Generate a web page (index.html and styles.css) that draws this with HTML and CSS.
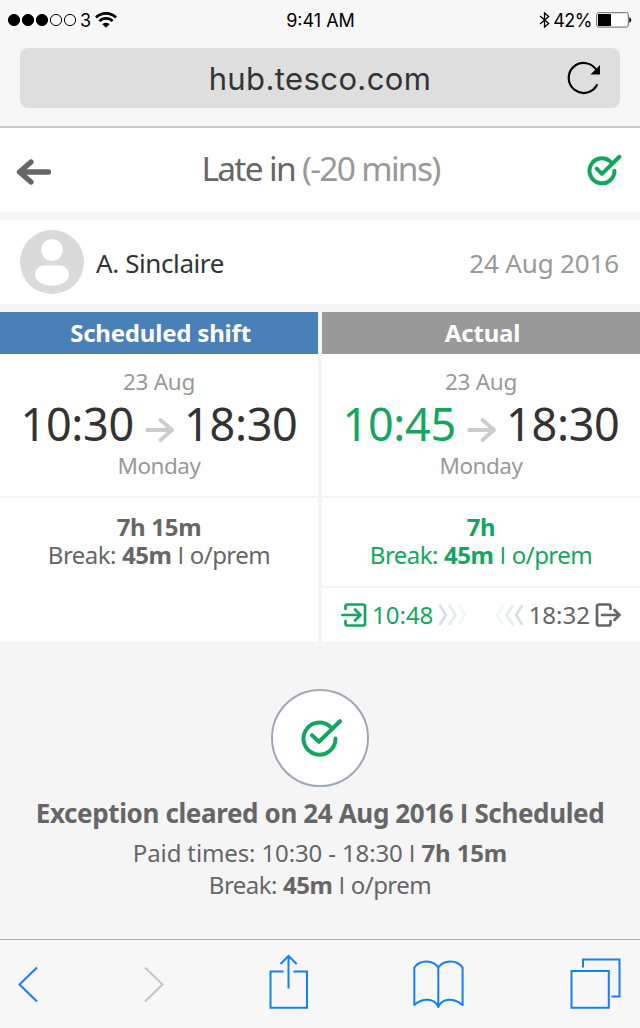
FILE: index.html
```html
<!DOCTYPE html>
<html lang="en">
<head>
<meta charset="utf-8">
<title>Late in</title>
<link rel="stylesheet" href="styles.css">
</head>
<body>
<div class="browser-top">
  <div class="status">
    <div class="status-left">
      <svg width="70" height="14" viewBox="0 0 70 14"><g stroke="#000" stroke-width="1"><circle cx="6" cy="7" r="5.6"/><circle cx="20" cy="7" r="5.6"/><circle cx="34" cy="7" r="5.6"/><circle cx="48" cy="7" r="5.6" fill="none"/><circle cx="62" cy="7" r="5.6" fill="none"/></g></svg>
      <span class="carrier">3</span>
      <svg width="22" height="16" viewBox="0 0 22 16"><g fill="none" stroke="#000" stroke-width="2.7"><path d="M1 5.5a14.2 14.2 0 0 1 20 0"/><path d="M4.4 9.1a9.3 9.3 0 0 1 13.2 0"/></g><path d="M11 15.8L7.4 12.2a5.1 5.1 0 0 1 7.2 0z"/></svg>
    </div>
    <div class="clock">9:41 AM</div>
    <div class="status-right">
      <svg width="12" height="16" viewBox="0 0 12 16"><path d="M1 4l8.7 7.4L5.5 15V1l4.2 3.6L1 12" fill="none" stroke="#000" stroke-width="1.3"/></svg>
      <span class="percent">42%</span>
      <svg width="36" height="16" viewBox="0 0 36 16"><rect x=".7" y=".7" width="31.6" height="14.4" rx="2" fill="#fff" stroke="#666"/><path d="M2 2h13v12H2z"/><path d="M33.3 5.2c2.6 1 2.6 4.6 0 5.6z"/></svg>
    </div>
  </div>
  <div class="address">
    <span class="host">hub.tesco.com</span>
    <svg class="reload" width="34" height="34" viewBox="0 0 34 34"><path d="M30.3 23.3A15 15 0 1 1 29.8 9.700" fill="none" stroke="#000" stroke-width="2.2"/><path d="M33 4v9.5h-9.5z"/></svg>
  </div>
</div>

<header class="title-bar">
  <svg width="36" height="28" viewBox="0 0 36 28"><path d="M32.5 14H3.5M15 4L3.5 14 15 24" fill="none" stroke="#666" stroke-width="5.3" stroke-linecap="round" stroke-linejoin="round"/></svg>
  <h1>Late in <span>(-20 mins)</span></h1>
  <svg class="cleared" width="36" height="34" viewBox="0 0 36 34"><path d="M28.5 17.7a12.5 12.5 0 1 1-4.4-9.4M10.7 15.6l5.2 5.3L33.4 3.8" fill="none" stroke="#14a661" stroke-width="4" stroke-linecap="round" stroke-linejoin="round"/></svg>
</header>

<section class="person">
  <svg width="64" height="64" viewBox="0 0 64 64"><circle cx="32" cy="32" r="32" fill="#dadada"/><circle cx="32" cy="20" r="10.8" fill="#fff"/><path d="M24 35.5h16c5 0 9 4.500 9 9.500 0 6-8 10.800-17 10.800S15 51 15 45c0-5 4-9.500 9-9.500z" fill="#fff"/></svg>
  <span class="name">A. Sinclaire</span>
  <span class="date">24 Aug 2016</span>
</section>

<main class="columns">
  <section class="column">
    <h2 class="band band-blue">Scheduled shift</h2>
    <div class="shift">
      <p class="small">23 Aug</p>
      <div class="times">
        <span>10:30</span>
        <svg width="30" height="26" viewBox="0 0 30 26"><path d="M2 13h25M15.500 3L27 13 15.500 23" fill="none" stroke="#ccc" stroke-width="3.800" stroke-linecap="round" stroke-linejoin="round"/></svg>
        <span>18:30</span>
      </div>
      <p class="small day">Monday</p>
    </div>
    <div class="hours">
      <p class="total">7h 15m</p>
      <p class="break">Break: <b>45m</b> <i class="sep">I</i> o/prem</p>
    </div>
  </section>
  <section class="column">
    <h2 class="band band-grey">Actual</h2>
    <div class="shift">
      <p class="small">23 Aug</p>
      <div class="times">
        <span class="green">10:45</span>
        <svg width="30" height="26" viewBox="0 0 30 26"><path d="M2 13h25M15.500 3L27 13 15.500 23" fill="none" stroke="#ccc" stroke-width="3.800" stroke-linecap="round" stroke-linejoin="round"/></svg>
        <span>18:30</span>
      </div>
      <p class="small day">Monday</p>
    </div>
    <div class="hours hours-actual green">
      <p class="total">7h</p>
      <p class="break">Break: <b>45m</b> <i class="sep">I</i> o/prem</p>
    </div>
    <div class="punches">
      <div class="punch green">
        <svg width="26" height="26" viewBox="0 0 26 26"><g fill="none" stroke="#14a661" stroke-width="2.700" stroke-linecap="round" stroke-linejoin="round"><path d="M4.500 7V4.500Q4.500 2.500 6.500 2.500H22Q24 2.500 24 4.500V21.500Q24 23.500 22 23.500H6.500Q4.500 23.500 4.500 21.500V19M1.500 13H19M14 7.500L19.500 13 14 18.500"/></g></svg>
        <span>10:48</span>
        <svg class="trail" width="29" height="24" viewBox="0 0 29 24"><g fill="none" stroke="#c9ced6" stroke-width="2.500"><path d="M1.500 2L8 12 1.500 22" opacity=".7"/><path d="M11 2l6.500 10L11 22" opacity=".45"/><path d="M20.500 2L27 12l-6.500 10" opacity=".2"/></g></svg>
      </div>
      <div class="punch">
        <svg class="trail" width="29" height="24" viewBox="0 0 29 24"><g fill="none" stroke="#c9ced6" stroke-width="2.500"><path d="M27.500 2L21 12l6.500 10" opacity=".7"/><path d="M18 2l-6.500 10L18 22" opacity=".45"/><path d="M8.500 2L2 12l6.500 10" opacity=".2"/></g></svg>
        <span>18:32</span>
        <svg width="26" height="26" viewBox="0 0 26 26"><g fill="none" stroke="#666" stroke-width="2.700" stroke-linecap="round" stroke-linejoin="round"><path d="M15.500 7V4.500Q15.500 2.500 13.500 2.500H4Q2 2.500 2 4.500V21.500Q2 23.500 4 23.500H13.500Q15.500 23.500 15.500 21.500V19M7 13H24.500M19.500 8L24.500 13 19.500 18"/></g></svg>
      </div>
    </div>
  </section>
</main>

<section class="outcome">
  <div class="badge">
    <svg width="50" height="44" viewBox="0 0 50 44"><path d="M40.500 22.500a16 16 0 1 1-5-11.500M17 19.200l7 6.600L45 5.200" fill="none" stroke="#14a661" stroke-width="4" stroke-linecap="round" stroke-linejoin="round"/></svg>
  </div>
  <h3>Exception cleared on 24 Aug 2016 <i class="sep">I</i> Scheduled</h3>
  <p class="paid">Paid times: 10:30 - 18:30 <i class="sep">I</i> <b>7h 15m</b></p>
  <p class="break">Break: <b>45m</b> <i class="sep">I</i> o/prem</p>
</section>

<nav class="toolbar">
  <svg width="20" height="60" viewBox="18 952 20 60"><path d="M37 967.500L19.500 984.500 37 1001.500"/></svg>
  <svg class="disabled" width="21" height="60" viewBox="143 952 21 60"><path d="M145 967.500l17.500 17L145 1001.500"/></svg>
  <svg width="39" height="60" viewBox="269.500 952 39 60"><path d="M284 971.500H271v36.200h36.500v-36.200H294M289 988.500V956M281 964l8-8 8.200 8"/></svg>
  <svg width="51" height="60" viewBox="413.700 952 51 60"><path d="M439 967.500C434 960 421 959 415 967.500V1005C424 997.500 435 998 439 1007 443 998 454 997.500 463.300 1005V967.500C457 959 444 960 439 967.500V1007" stroke-linejoin="round"/></svg>
  <svg width="51" height="60" viewBox="569.500 952 51 60"><path d="M571 971h37.300v36.700H571zM582.500 967.500v-8H619v37h-8"/></svg>
</nav>
</body>
</html>
```
FILE: styles.css
```css
* { box-sizing: border-box; }
body {
  margin: 0;
  width: 640px;
  height: 1028px;
  overflow: hidden;
  display: flex;
  flex-direction: column;
  background: #f5f5f5;
  color: #666;
  font-family: "Noto Sans", sans-serif;
  font-size: 24px;
}
svg { display: block; flex: none; }
h1, h2, h3, p { margin: 0; font-weight: 400; white-space: nowrap; }
b { font-weight: 700; }
.green { color: #14a661; }
.sep { font-family: "Open Sans", sans-serif; font-style: normal; }

.browser-top {
  height: 128px;
  background: #f7f7f7;
  border-bottom: 2px solid #c9c9c9;
  padding: 0 20px;
  color: #000;
  font-family: Inter, sans-serif;
}
.status {
  display: grid;
  grid-template-columns: 1fr auto 1fr;
  align-items: center;
  height: 40px;
  margin: 0 -12px 8px;
  font-size: 18px;
}
.status-left, .status-right { display: flex; align-items: center; }
.clock { padding-left: 1px; }
.carrier { margin: 0 5px 0 2px; }
.status-left svg + .carrier + svg { margin-left: -1px; }
.status-right { justify-content: flex-end; }
.percent { margin: 0 4px 0 2px; letter-spacing: -.5px; }
.address {
  display: flex;
  align-items: center;
  justify-content: flex-end;
  height: 60px;
  padding: 0 19px 0 0;
  border-radius: 8px;
  background: #dedede;
}
.host {
  flex: 1;
  padding-left: 53px;
  text-align: center;
  font-size: 31px;
  letter-spacing: .4px;
  color: #333;
}

.title-bar {
  display: flex;
  align-items: center;
  justify-content: space-between;
  height: 84px;
  padding: 3px 18px 0 16px;
  background: #fff;
}
.title-bar h1 { font-size: 33.5px; line-height: 50px; letter-spacing: -1.7px; margin-top: -7px; padding-left: 3px; }
.title-bar h1 span { color: #999; }
.cleared { margin-top: -4px; }

.person {
  display: flex;
  align-items: center;
  height: 84px;
  margin: 8px 0;
  padding: 0 21px 0 20px;
  background: #fff;
  font-size: 26px;
}
.person span { padding-top: 2px; }
.name { margin-left: 12px; color: #333; letter-spacing: -.4px; }
.date { margin-left: auto; color: #999; letter-spacing: -.15px; }

.columns { display: grid; grid-template-columns: 318px 318px; gap: 4px; height: 330px; }
.column { display: flex; flex-direction: column; background: #fff; text-align: center; }
.band { height: 42px; padding-left: 3px; line-height: 42px; font-size: 24px; font-weight: 700; color: #fff; letter-spacing: -.2px; }
.band-blue { background: #4a80b8; }
.band-grey { background: #999; }
.shift { height: 144px; padding-top: 14px; border-bottom: 2px solid #f5f5f5; }
.small { font-size: 22.5px; line-height: 28px; color: #999; letter-spacing: -.3px; }
.day { letter-spacing: -.5px; }
.times {
  display: flex;
  justify-content: center;
  gap: 10px;
  height: 56px;
  font-size: 45px;
  line-height: 56px;
  letter-spacing: -.3px;
}
.times span { color: #333; }
.times .green { color: #14a661; }
.times svg { margin: 21px -1px 0 1px; }
.hours { padding-top: 15px; line-height: 28px; }
.hours-actual { height: 90px; border-bottom: 2px solid #f5f5f5; }
.total { font-weight: 700; letter-spacing: -.3px; }
.break { letter-spacing: -.55px; word-spacing: .5px; }
.punches { display: flex; justify-content: space-between; height: 54px; padding: 0 19px; line-height: 54px; }
.punch { display: flex; align-items: center; gap: 5px; }

.outcome { flex: 1; padding-top: 47px; line-height: 32px; text-align: center; }
.badge {
  display: grid;
  place-items: center;
  width: 98px;
  height: 98px;
  margin: 0 auto 10px;
  border: 2px solid #a0a8b4;
  border-radius: 50%;
  background: #fff;
}
.outcome h3 { margin-bottom: 8px; font-size: 26px; font-weight: 700; letter-spacing: -.37px; }
.paid { letter-spacing: -.13px; }

.toolbar {
  display: flex;
  justify-content: space-between;
  height: 89px;
  padding: 12px 19.5px 0 18px;
  border-top: 1px solid #a9a9a9;
  background: #f7f7f7;
}
.toolbar svg { fill: none; stroke: #147efb; stroke-width: 2; }
.toolbar .disabled { stroke: #c5c5c5; }
```
